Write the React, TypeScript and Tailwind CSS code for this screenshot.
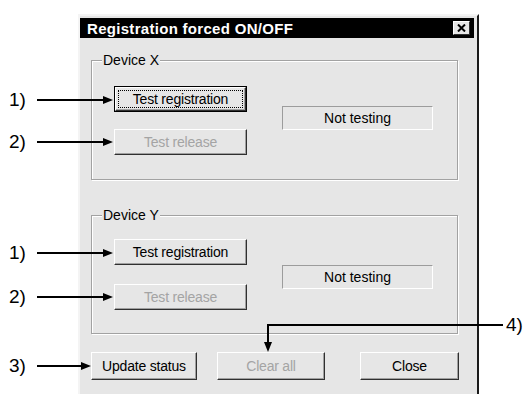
import React from 'react'

const font = { fontFamily: '"Liberation Sans", Arial, sans-serif' }

interface BtnProps {
  label: string
  width: string
  height: string
  disabled?: boolean
  focused?: boolean
}

// Win95-style push button
function Button({ label, width, height, disabled, focused }: BtnProps) {
  const bevel = `${width} ${height} flex items-center justify-center bg-[#e6e6e6] border border-t-white border-l-white border-r-[#303030] border-b-[#303030] shadow-[inset_-1px_-1px_0_#a0a0a0] text-[14px] tracking-[-0.2px]`
  const text = disabled ? 'text-[#a4a4a4]' : 'text-black'
  if (focused) {
    return (
      <div className={`${width} ${height} border border-black flex`}>
        <div className={`flex-1 flex items-center justify-center bg-[#e6e6e6] border border-t-white border-l-white border-r-[#303030] border-b-[#303030] shadow-[inset_-1px_-1px_0_#a0a0a0] p-[2px]`}>
          <div className={`w-full h-full flex items-center justify-center border border-dotted border-black text-[14px] tracking-[-0.2px] ${text}`}>
            {label}
          </div>
        </div>
      </div>
    )
  }
  return <div className={`${bevel} ${text}`}>{label}</div>
}

function StatusBox() {
  return (
    <div className="w-[151px] h-[24px] flex items-center justify-center border border-t-[#9c9c9c] border-l-[#9c9c9c] border-r-white border-b-white text-[14px] text-black">
      Not testing
    </div>
  )
}

interface GroupProps {
  title: string
  height: string
  padTop: string
  gap: string
  statusTop: string
  firstFocused?: boolean
}

function DeviceGroup({ title, height, padTop, gap, statusTop, firstFocused }: GroupProps) {
  return (
    <div className={`relative ml-[11px] w-[367px] ${height} border border-[#a2a2a2] shadow-[inset_1px_1px_0_#fff,1px_1px_0_#fff]`}>
      <span className="absolute left-[10px] top-[-9px] px-[1px] bg-[#e6e6e6] text-[14px] leading-[16px] text-black">
        {title}
      </span>
      <div className={`flex items-start ${padTop} pl-[22px]`}>
        <div className={`flex flex-col ${gap}`}>
          <Button label="Test registration" width="w-[133px]" height="h-[26px]" focused={firstFocused} />
          <Button label="Test release" width="w-[133px]" height="h-[26px]" disabled />
        </div>
        <div className={`ml-[35px] ${statusTop}`}>
          <StatusBox />
        </div>
      </div>
    </div>
  )
}

const arrowsY = [100, 142, 253, 297]

export default function App() {
  return (
    <div className="relative w-[525px] h-[394px] bg-white overflow-hidden" style={font}>
      <div className="ml-[78px] pt-[14px]">
        <div className="w-[401px] h-[384px] bg-[#e6e6e6] border-2 border-t-[#f4f4f4] border-l-[#f4f4f4] border-r-[#1a1a1a] border-b-[#1a1a1a]">
          {/* title bar */}
          <div className="mt-[2px] mr-[3px] h-[20px] bg-black flex items-center justify-between pl-[7px] pr-[4px]">
            <span className="text-white font-bold text-[15px] tracking-[0.3px] leading-none">Registration forced ON/OFF</span>
            <div className="w-[17px] h-[14px] bg-[#e6e6e6] border border-t-white border-l-white border-r-[#303030] border-b-[#303030] flex items-center justify-center">
              <svg width="9" height="8" viewBox="0 0 9 8">
                <path d="M1 0.5 L8 7.5 M8 0.5 L1 7.5" stroke="black" strokeWidth="2" />
              </svg>
            </div>
          </div>

          <div className="mt-[22px]">
            <DeviceGroup title="Device X" height="h-[120px]" padTop="pt-[25px]" gap="gap-[17px]" statusTop="mt-[20px]" firstFocused />
          </div>
          <div className="mt-[35px]">
            <DeviceGroup title="Device Y" height="h-[119px]" padTop="pt-[23px]" gap="gap-[19px]" statusTop="mt-[26px]" />
          </div>

          <div className="mt-[18px] ml-[11px] flex">
            <Button label="Update status" width="w-[106px]" height="h-[28px]" />
            <div className="ml-[20px]">
              <Button label="Clear all" width="w-[108px]" height="h-[28px]" disabled />
            </div>
            <div className="ml-[35px]">
              <Button label="Close" width="w-[99px]" height="h-[28px]" />
            </div>
          </div>
        </div>
      </div>

      {/* callout annotations */}
      <svg className="absolute left-0 top-0 pointer-events-none" width="525" height="394">
        {arrowsY.map(y => (
          <g key={y}>
            <line x1="37" y1={y} x2="104" y2={y} stroke="black" strokeWidth="2" />
            <polygon points={`103,${y - 4} 113,${y} 103,${y + 4}`} fill="black" />
          </g>
        ))}
        <line x1="37" y1="366" x2="82" y2="366" stroke="black" strokeWidth="2" />
        <polygon points="81,362 91,366 81,370" fill="black" />
        <line x1="268" y1="325" x2="503" y2="325" stroke="black" strokeWidth="2" />
        <line x1="268" y1="324" x2="268" y2="343" stroke="black" strokeWidth="2" />
        <polygon points="264,342 268,352 272,342" fill="black" />
      </svg>
      {[
        { t: '1)', y: 100 },
        { t: '2)', y: 142 },
        { t: '1)', y: 253 },
        { t: '2)', y: 297 },
        { t: '3)', y: 366 },
      ].map((a, i) => (
        <span key={i} className="absolute left-[9px] text-[19px] leading-[22px] text-black" style={{ top: a.y - 11 }}>
          {a.t}
        </span>
      ))}
      <span className="absolute left-[506px] top-[314px] text-[19px] leading-[22px] text-black">4)</span>
    </div>
  )
}
